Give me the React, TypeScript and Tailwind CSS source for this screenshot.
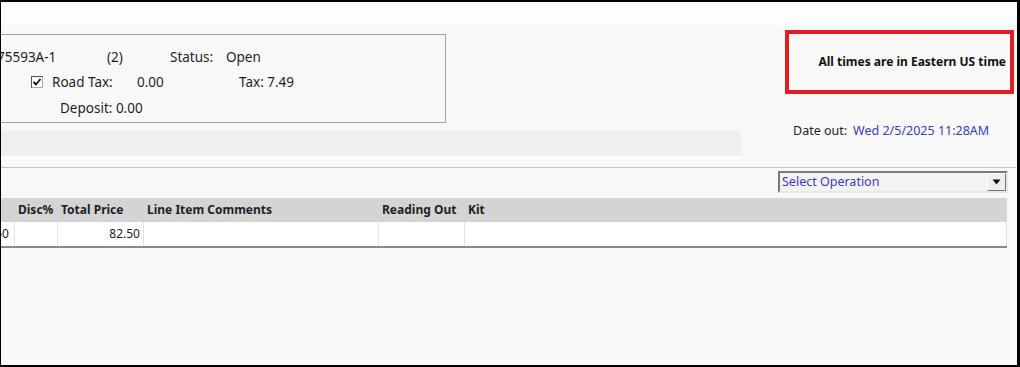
import React from "react";

const font = { fontFamily: '"Noto Sans", "Open Sans", Arial, sans-serif' };

function CheckBox() {
  return (
    <span className="flex h-[12px] w-[12px] items-center justify-center border border-t-[#555] border-l-[#555] border-b-[#aaa] border-r-[#aaa] bg-white">
      <svg width="10" height="10" viewBox="0 0 10 10">
        <path d="M1.5 5 L4 7.5 L8.5 2" fill="none" stroke="#111" strokeWidth="1.8" />
      </svg>
    </span>
  );
}

function SelectOperation() {
  return (
    <div className="flex h-[22px] w-[230px] border-2 border-t-[#7a7a7a] border-l-[#7a7a7a] border-b-[#e8e8e8] border-r-[#e8e8e8] bg-[#f3f3f3]">
      <div className="flex flex-1 items-center pl-[2px] text-[12.5px] text-[#3a3ac8]">Select Operation</div>
      <div className="flex w-[19px] items-center justify-center border border-t-white border-l-white border-b-[#777] border-r-[#777] bg-[#efefef]">
        <svg width="9" height="6" viewBox="0 0 9 6">
          <path d="M0.5 0.5 H8.5 L4.5 5.5 Z" fill="#111" />
        </svg>
      </div>
    </div>
  );
}

const columns = [
  { w: "w-[14px]", title: "", value: "82.50", right: true },
  { w: "w-[43px]", title: "Disc%", value: "", right: false },
  { w: "w-[86px]", title: "Total Price", value: "82.50", right: true },
  { w: "w-[235px]", title: "Line Item Comments", value: "", right: false },
  { w: "w-[86px]", title: "Reading Out", value: "", right: false },
  { w: "flex-1", title: "Kit", value: "", right: false },
];

function LineItems() {
  return (
    <div className="w-[1006px] border-b-2 border-[#8a8a8a] shadow-[0_1px_0_#d0d0d0]">
      <div className="flex h-[24px] bg-[#d4d4d4]">
        {columns.map((c, i) => (
          <div key={i} className={`${c.w} flex items-center overflow-hidden whitespace-nowrap pl-[3px] text-[12px] font-bold text-[#222]`}>
            {c.title}
          </div>
        ))}
      </div>
      <div className="flex h-[24px] bg-white">
        {columns.map((c, i) => (
          <div
            key={i}
            className={`${c.w} flex items-center overflow-hidden whitespace-nowrap border-r border-[#e2e2e2] text-[12px] text-[#222] ${c.right ? (i === 0 ? "justify-end pr-[5px]" : "justify-end pr-[3px]") : "pl-[3px]"}`}
          >
            {c.value}
          </div>
        ))}
      </div>
    </div>
  );
}

export default function App() {
  return (
    <div
      className="flex h-[367px] w-[1020px] flex-col overflow-hidden border-t-2 border-b-2 border-l border-r-[3px] border-black bg-[#f8f8f8] text-[#1f1f1f]"
      style={font}
    >
      <div className="h-[23px] shrink-0 bg-[#fdfdfd]" />

      <div className="flex">
        <div className="w-[740px]">
          <div className="mt-[9px] h-[89px] w-[445px] border border-l-0 border-[#a3a3a3] pt-[10px] text-[13.5px]">
            <div className="flex h-[24px] items-center whitespace-nowrap">
              <span className="-ml-[4px] w-[110px]">75593A-1</span>
              <span className="w-[63px]">(2)</span>
              <span className="w-[56px]">Status:</span>
              <span>Open</span>
            </div>
            <div className="flex h-[26px] items-center whitespace-nowrap">
              <span className="ml-[30px] mr-[9px]">
                <CheckBox />
              </span>
              <span className="w-[85px]">Road Tax:</span>
              <span className="w-[102px]">0.00</span>
              <span>Tax: 7.49</span>
            </div>
            <div className="flex h-[27px] items-center whitespace-nowrap">
              <span className="ml-[59px]">Deposit: 0.00</span>
            </div>
          </div>
          <div className="mt-[8px] h-[25px] bg-[#efefef]" />
          <div className="h-[3px] bg-white" />
        </div>

        <div className="flex flex-1 flex-col">
          <div className="ml-[44px] mt-[5px] flex h-[64px] w-[229px] items-center justify-end border-4 border-[#e31b23] pr-[4px] text-[12px] font-bold text-[#111]">
            All times are in Eastern US time
          </div>
          <div className="ml-[52px] mt-[28px] flex items-center gap-[6px] whitespace-nowrap text-[12.5px]">
            <span>Date out:</span>
            <span className="text-[#3a3ac8]">Wed 2/5/2025 11:28AM</span>
          </div>
        </div>
      </div>

      <div className="mt-[8px] h-px w-[1015px] bg-[#c4c4c4]" />

      <div className="mt-[3px] flex justify-end pr-[9px]">
        <SelectOperation />
      </div>

      <div className="mt-[5px]">
        <LineItems />
      </div>

      <div className="flex-1 bg-[#f9faf9]" />
    </div>
  );
}
